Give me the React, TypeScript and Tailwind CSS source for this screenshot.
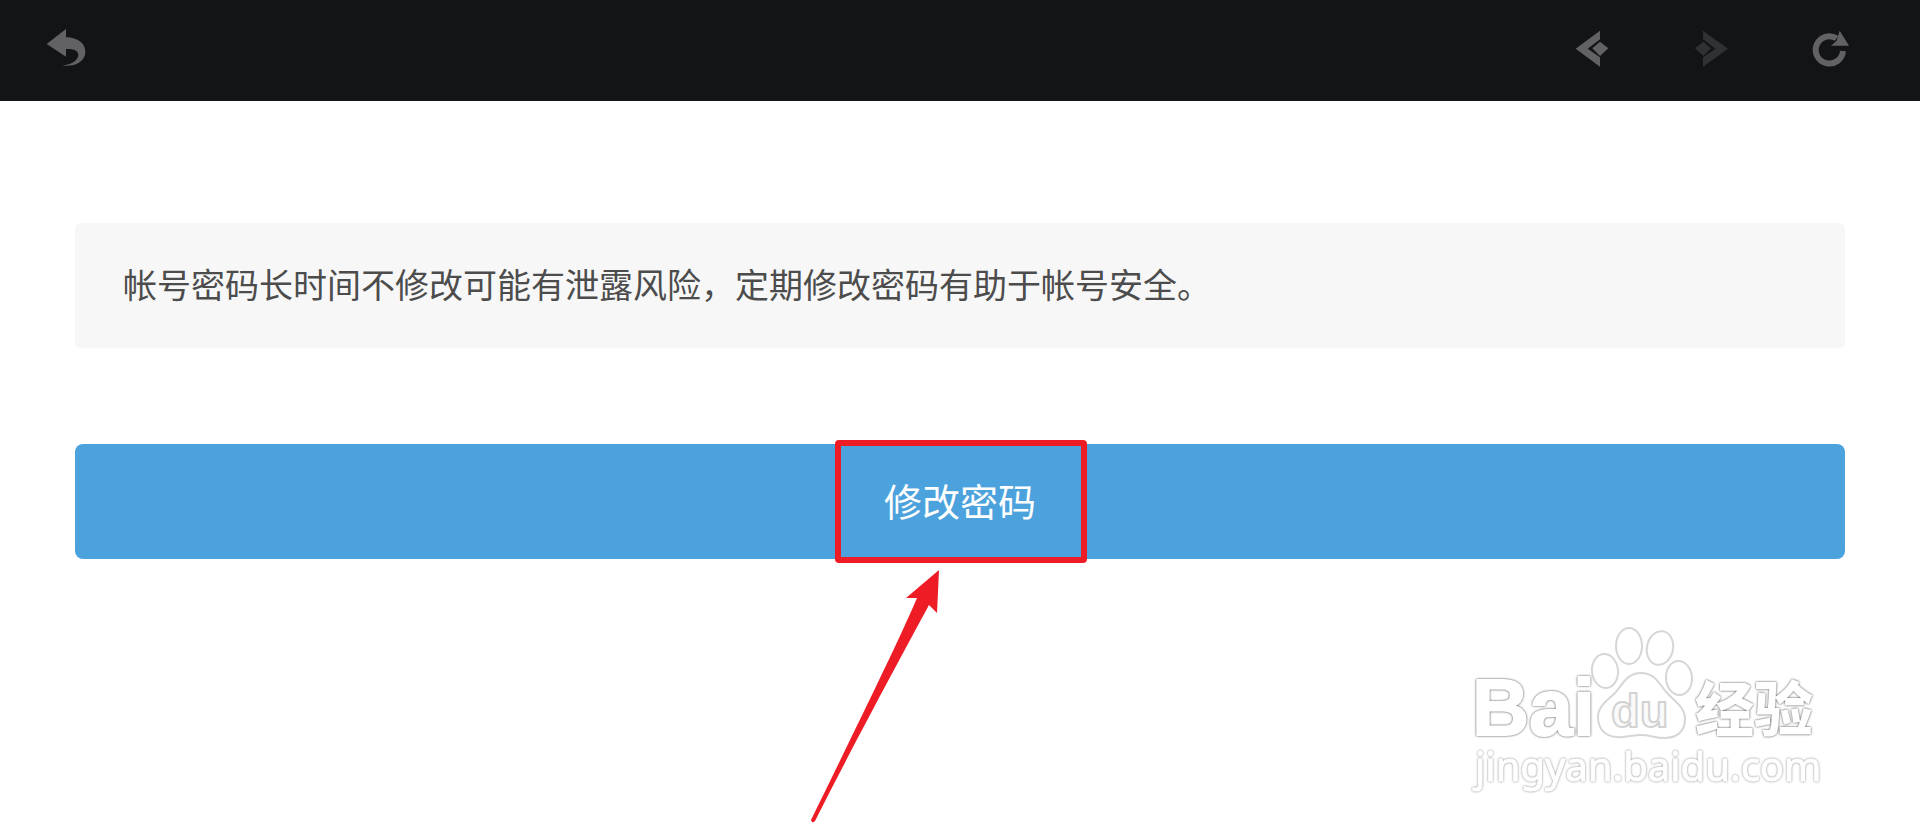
function BackIcon() {
  return (
    <svg viewBox="48 54 120 120" className="h-10 w-10" fill="currentColor" aria-hidden="true">
      <path d="M50 102 108 57V82C144 83 166 100 166 126 166 154 136 171 97 167 125 164 144 151 145 136 146 122 132 116 108 117V140Z" />
    </svg>
  );
}

function PreviousIcon() {
  return (
    <svg viewBox="66 54 120 120" className="h-10 w-10" fill="currentColor" aria-hidden="true">
      <path d="M77 116 150 62V88L113 116 150 142V170Z" />
      <path d="M150 95 175 115 150 138 127 115Z" />
    </svg>
  );
}

function NextIcon() {
  return (
    <svg viewBox="427 54 120 120" className="h-10 w-10" fill="currentColor" aria-hidden="true">
      <path d="M535 116 460 62V88L497 116 460 142V170Z" />
      <path d="M461 95 484 115 461 138 436 115Z" />
    </svg>
  );
}

function ReloadIcon() {
  return (
    <svg viewBox="98 54 120 120" className="h-10 w-10" aria-hidden="true">
      <path d="M191 123A41 41 0 1 1 172 85" fill="none" stroke="currentColor" strokeWidth="18" />
      <path d="M181 62 209 107H155L172 92Z" fill="currentColor" />
    </svg>
  );
}

function Watermark() {
  return (
    <svg
      viewBox="1469 620 376 180"
      className="h-[180px] w-[376px]"
      fill="#fff"
      stroke="#fff"
      strokeLinejoin="round"
      role="img"
      aria-label="Baidu 经验"
    >
      <g className="[filter:drop-shadow(0_0_1px_#444)]" strokeWidth="2">
        <text x="1472" y="735" fontSize="79" fontWeight="700" fontFamily="'Liberation Sans', sans-serif">
          Bai
        </text>
        <text x="1695" y="731" fontSize="59" fontWeight="900" strokeWidth="0" fontFamily="'Noto Sans CJK SC', sans-serif">
          经验
        </text>
      </g>
      <g className="[filter:drop-shadow(0_0_1px_#888)]">
        <text x="1475" y="781" fontSize="40" strokeWidth="1" fontFamily="'Noto Sans', sans-serif">
          jingyan.baidu.com
        </text>
      </g>
      <g stroke="#d6d6d6" strokeWidth="2">
        <ellipse cx="1605" cy="671" rx="13" ry="17" transform="rotate(-6 1605 671)" />
        <ellipse cx="1629" cy="646" rx="13" ry="18" />
        <ellipse cx="1660" cy="648" rx="13" ry="17" transform="rotate(12 1660 648)" />
        <ellipse cx="1679" cy="678" rx="13" ry="17" transform="rotate(-4 1679 678)" />
        <path d="M1641 673C1656 673 1660 686 1668 694 1676 702 1685 708 1685 719 1685 732 1676 738 1665 738 1655 738 1650 735 1641 735 1632 735 1626 738 1616 737 1605 736 1598 729 1598 717 1598 706 1608 700 1615 693 1623 684 1627 673 1641 673Z" />
      </g>
      <text x="1611" y="727" fontSize="47" fontWeight="700" fill="#fafafa" stroke="#d2d2d2" strokeWidth="2" fontFamily="'Liberation Sans', sans-serif">
        du
      </text>
    </svg>
  );
}

export default function App() {
  return (
    <div className="min-h-screen bg-white font-['Noto_Sans_CJK_SC',sans-serif]">
      <header className="flex h-[101px] items-start justify-between bg-[#131416] pt-7 pr-[68px] pl-[46px] text-[#626264]">
        <button type="button" aria-label="返回">
          <BackIcon />
        </button>
        <nav className="flex gap-20">
          <button type="button" aria-label="后退">
            <PreviousIcon />
          </button>
          <button type="button" aria-label="前进" className="text-[#303133]">
            <NextIcon />
          </button>
          <button type="button" aria-label="刷新">
            <ReloadIcon />
          </button>
        </nav>
      </header>

      <main className="px-[75px] pt-[122px]">
        <p className="rounded-md bg-[#f7f7f7] px-12 pt-[34px] pb-[38px] text-[34px] leading-[53px] text-[#4c4c4c]">
          帐号密码长时间不修改可能有泄露风险，定期修改密码有助于帐号安全。
        </p>

        <div className="relative mt-24">
          <button
            type="button"
            className="block h-[115px] w-full rounded-lg bg-[#4ca2dc] pb-1 text-[38px] text-white"
          >
            修改密码
          </button>
          <div className="pointer-events-none absolute -inset-y-1 left-1/2 w-[252px] -translate-x-[125px] rounded border-6 border-[#ee1c24]" />
          <svg
            viewBox="810 568 130 256"
            className="pointer-events-none absolute top-[124px] left-1/2 h-64 w-[130px] -translate-x-[150px]"
            fill="#ee1c24"
            aria-hidden="true"
          >
            <path d="M939 570 906 598 917 598C896 647 855 730 811 820Q812 824 815 821C857 738 902 655 929 605L937 613Z" />
          </svg>
        </div>

        <div className="mt-[61px] flex justify-end">
          <Watermark />
        </div>
      </main>
    </div>
  );
}
